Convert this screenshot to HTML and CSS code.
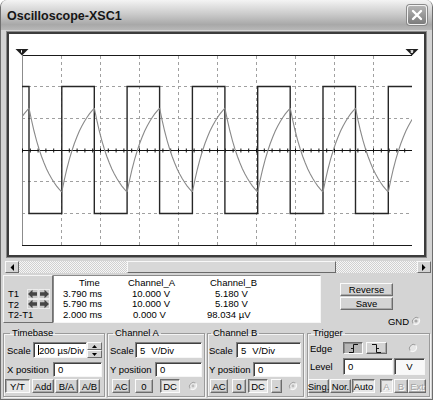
FILE: index.html
```html
<!DOCTYPE html>
<html>
<head>
<meta charset="utf-8">
<link rel="stylesheet" href="styles.css">
</head>
<body>
<div class="win">
  <div class="title">
    <span class="ttext">Oscilloscope-XSC1</span>
    <div class="close"><svg width="14" height="14" viewBox="0 0 14 14"><path d="M3 3L11 11M11 3L3 11" stroke="#fff" stroke-width="2.4" stroke-linecap="round"/></svg></div>
  </div>

  <div class="screen">
    <div class="screen-in">
      <svg class="plot" width="415" height="221" viewBox="9 34 415 221">
        <defs>
          <clipPath id="clip"><rect x="22" y="40" width="390" height="210"/></clipPath>
          <path id="rise" d="M0,0l2.51,-12.2l2.51,-10.8l2.51,-9.6l2.51,-8.4l2.51,-7.5l2.51,-6.5l2.51,-5.9l2.51,-5.1l2.51,-4.5l2.51,-4l2.51,-3.6l2.51,-3.1l2.51,-2.8"/>
          <path id="fall" d="M0,0l2.51,12.2l2.51,10.8l2.51,9.6l2.51,8.4l2.51,7.5l2.51,6.5l2.51,5.9l2.51,5.1l2.51,4.5l2.51,4l2.51,3.6l2.51,3.1l2.51,2.8"/>
        </defs>
        <g stroke="#a0a0a0" stroke-width="1" stroke-dasharray="3 3" fill="none">
          <path d="M22 86.5H412M22 118.5H412M22 181.5H412M22 213.5H412"/>
          <path d="M61.5 56V245M100.5 56V245M139.5 56V245M178.5 56V245M217.5 56V245M256.5 56V245M295.5 56V245M334.5 56V245M373.5 56V245"/>
        </g>
        <path d="M22 55.5H412M22 245.5H412" stroke="#1a1a1a" stroke-width="1.2" fill="none"/>
        <path d="M22.5 55V245" stroke="#8c8c8c" stroke-width="1" fill="none"/>
        <path d="M22 150.5H412" stroke="#111" stroke-width="1.2" fill="none"/>
        <path d="M22 150.5H412" stroke="#111" stroke-width="4" stroke-dasharray="1 6.8" fill="none"/>
        <path d="M22 86.5H29V213.5H61.8V86.5H94.3V213.5H127.1V86.5H159.6V213.5H192.4V86.5H224.9V213.5H257.7V86.5H290.2V213.5H323V86.5H355.5V213.5H388.3V86.5H412" stroke="#262626" stroke-width="1.4" fill="none"/>
        <g stroke="#8a8a8a" stroke-width="1.1" fill="none" clip-path="url(#clip)">
          <use href="#rise" x="-3.5" y="192"/>
          <use href="#fall" x="29" y="108"/>
          <use href="#rise" x="61.8" y="192"/>
          <use href="#fall" x="94.3" y="108"/>
          <use href="#rise" x="127.1" y="192"/>
          <use href="#fall" x="159.6" y="108"/>
          <use href="#rise" x="192.4" y="192"/>
          <use href="#fall" x="224.9" y="108"/>
          <use href="#rise" x="257.7" y="192"/>
          <use href="#fall" x="290.2" y="108"/>
          <use href="#rise" x="323" y="192"/>
          <use href="#fall" x="355.5" y="108"/>
          <use href="#rise" x="388.3" y="192"/>
        </g>
        <path d="M15.5 49H28.5L22 55.5Z" fill="#1e1e1e"/>
        <path d="M21.5 50.2V52.6" stroke="#fff" stroke-width="1"/>
        <path d="M405.5 49H418.5L412 55.5Z" fill="#1e1e1e"/>
        <path d="M410.5 50.5H413V51.5H411V52.5H413" stroke="#fff" stroke-width="0.8" fill="none"/>
      </svg>
    </div>
  </div>

  <div class="scroll">
    <div class="sbtn"><svg width="4" height="7" viewBox="0 0 4 7"><path d="M4 0V7L0.5 3.5Z" fill="#000"/></svg></div>
    <div class="track"><div class="thumb"></div></div>
    <div class="sbtn"><svg width="4" height="7" viewBox="0 0 4 7"><path d="M0 0V7L3.5 3.5Z" fill="#000"/></svg></div>
  </div>

  <div class="readout">
    <div class="tpanel">
      <div class="trow"></div>
      <div class="trow"><span class="tl">T1</span><svg class="arr" width="23" height="10" viewBox="0 0 23 10"><rect x="0.5" y="0.5" width="10.5" height="9" fill="#c8c8c8" stroke="#ececec"/><rect x="12" y="0.5" width="10.5" height="9" fill="#c8c8c8" stroke="#ececec"/><path d="M1 5L5.5 0.8V3.2H10V6.8H5.5V9.2Z" fill="#464646"/><path d="M22 5L17.5 0.8V3.2H13V6.8H17.5V9.2Z" fill="#464646"/></svg></div>
      <div class="trow"><span class="tl">T2</span><svg class="arr" width="23" height="10" viewBox="0 0 23 10"><rect x="0.5" y="0.5" width="10.5" height="9" fill="#c8c8c8" stroke="#ececec"/><rect x="12" y="0.5" width="10.5" height="9" fill="#c8c8c8" stroke="#ececec"/><path d="M1 5L5.5 0.8V3.2H10V6.8H5.5V9.2Z" fill="#464646"/><path d="M22 5L17.5 0.8V3.2H13V6.8H17.5V9.2Z" fill="#464646"/></svg></div>
      <div class="trow"><span class="tl">T2-T1</span></div>
    </div>
    <div class="table">
      <span class="c hd1">Time</span><span class="c">Channel_A</span><span class="c hd3">Channel_B</span>
      <span class="c">3.790 ms</span><span class="c v2">10.000 V</span><span class="c v3">5.180 V</span>
      <span class="c">5.790 ms</span><span class="c v2">10.000 V</span><span class="c v3">5.180 V</span>
      <span class="c">2.000 ms</span><span class="c v2b">0.000 V</span><span class="c">98.034 µV</span>
    </div>
    <div class="rside">
      <div class="btn rbtn">Reverse</div>
      <div class="btn rbtn save">Save</div>
      <div class="gnd"><span>GND</span><svg width="10" height="10" viewBox="0 0 10 10"><circle cx="5" cy="5" r="4" fill="#e6e6e6"/><path d="M2.2 7.8A4 4 0 0 1 7.8 2.2" stroke="#9a9a9a" fill="none"/><path d="M7.8 2.2A4 4 0 0 1 2.2 7.8" stroke="#fafafa" fill="none"/><circle cx="5" cy="5" r="1.6" fill="#a8a8a8"/></svg></div>
    </div>
  </div>

  <div class="groups">
    <fieldset class="grp g-tb">
      <legend class="lg-tb">Timebase</legend>
      <div class="row r1">
        <span class="lab w29 pl3">Scale</span>
        <div class="inp w54"><i class="caret"></i>200 µs/Div</div>
        <div class="spin">
          <span class="sp"><svg width="5" height="3" viewBox="0 0 5 3"><path d="M0 3H5L2.5 0Z" fill="#000"/></svg></span>
          <span class="sp"><svg width="5" height="3" viewBox="0 0 5 3"><path d="M0 0H5L2.5 3Z" fill="#000"/></svg></span>
        </div>
      </div>
      <div class="row r2">
        <span class="lab w49 pl3">X position</span>
        <div class="inp w49">0</div>
      </div>
      <div class="row r3">
        <span class="btn on w25 ml1">Y/T</span>
        <span class="btn w22 ml2">Add</span>
        <span class="btn w23 ml1">B/A</span>
        <span class="btn w21 ml1">A/B</span>
      </div>
    </fieldset>

    <fieldset class="grp g-cha">
      <legend class="lg-cha">Channel A</legend>
      <div class="row r1">
        <span class="lab w27 pl2">Scale</span>
        <div class="inp w67">5<span class="unit">V/Div</span></div>
      </div>
      <div class="row r2">
        <span class="lab w47 pl2">Y position</span>
        <div class="inp w47">0</div>
      </div>
      <div class="row r3">
        <span class="btn w18 ml4">AC</span>
        <span class="btn w18 ml5">0</span>
        <span class="btn on w20 ml7">DC</span>
        <svg class="radio ml8" width="10" height="10" viewBox="0 0 10 10"><circle cx="5" cy="5" r="4" fill="#e6e6e6"/><path d="M2.2 7.8A4 4 0 0 1 7.8 2.2" stroke="#a0a0a0" fill="none"/><path d="M7.8 2.2A4 4 0 0 1 2.2 7.8" stroke="#fafafa" fill="none"/><circle cx="5" cy="5" r="1.4" fill="#bcbcbc"/></svg>
      </div>
    </fieldset>

    <fieldset class="grp g-chb">
      <legend class="lg-chb">Channel B</legend>
      <div class="row r1">
        <span class="lab w28 pl1">Scale</span>
        <div class="inp w65">5<span class="unit">V/Div</span></div>
      </div>
      <div class="row r2">
        <span class="lab w45 pl1">Y position</span>
        <div class="inp w48">0</div>
      </div>
      <div class="row r3">
        <span class="btn w18 ml2">AC</span>
        <span class="btn w14 ml4">0</span>
        <span class="btn on w20 ml2">DC</span>
        <span class="btn w11 ml3">-</span>
        <svg class="radio ml6" width="10" height="10" viewBox="0 0 10 10"><circle cx="5" cy="5" r="4" fill="#e6e6e6"/><path d="M2.2 7.8A4 4 0 0 1 7.8 2.2" stroke="#a0a0a0" fill="none"/><path d="M7.8 2.2A4 4 0 0 1 2.2 7.8" stroke="#fafafa" fill="none"/><circle cx="5" cy="5" r="1.4" fill="#bcbcbc"/></svg>
      </div>
    </fieldset>

    <fieldset class="grp g-trig">
      <legend class="lg-trig">Trigger</legend>
      <div class="row t1">
        <span class="lab w35 pl2">Edge</span>
        <span class="btn edge-on w20"><svg width="11" height="9" viewBox="0 0 11 9"><path d="M1 8.5H5.5V0.5H10" stroke="#111" fill="none"/><path d="M3 4.5H5.5" stroke="#111"/></svg></span>
        <span class="btn w21 ml3"><svg width="11" height="9" viewBox="0 0 11 9"><path d="M1 0.5H5.5V8.5H10" stroke="#111" fill="none"/><path d="M5.5 4.5H8" stroke="#111"/></svg></span>
        <svg class="radio ml21" width="10" height="10" viewBox="0 0 10 10"><circle cx="5" cy="5" r="4" fill="#e6e6e6"/><path d="M2.2 7.8A4 4 0 0 1 7.8 2.2" stroke="#9a9a9a" fill="none"/><path d="M7.8 2.2A4 4 0 0 1 2.2 7.8" stroke="#fafafa" fill="none"/></svg>
      </div>
      <div class="row t2">
        <span class="lab w35 pl2">Level</span>
        <div class="inp w50">0</div>
        <div class="vbox ml1">V</div>
      </div>
      <div class="row t3">
        <span class="btn w21">Sing.</span>
        <span class="btn w21 ml1">Nor.</span>
        <span class="btn on w23 ml1">Auto</span>
        <span class="btn on off w13 ml5">A</span>
        <span class="btn off w14 ml1">B</span>
        <span class="btn off w18">Ext</span>
      </div>
    </fieldset>
  </div>
</div>
</body>
</html>
```

FILE: styles.css
```css
* { box-sizing: border-box; }

body {
  margin: 0;
  background: #fff;
  font-family: "Liberation Sans", Arial, sans-serif;
  font-size: 9.5px;
  color: #000;
}

.win {
  width: 433px;
  height: 400px;
  background: #d4d4d4;
  border: 1px solid #6e6e6e;
  border-top: 0;
  border-radius: 7px 7px 0 0;
  overflow: hidden;
  display: flex;
  flex-direction: column;
}

.title {
  flex: none;
  height: 30px;
  display: flex;
  align-items: center;
  justify-content: space-between;
  padding: 0 5px 0 6px;
  background: linear-gradient(#f4f4f4 0%, #e4e4e4 18%, #c8c8c8 50%, #a8a8a8 82%, #b8b8b8 100%);
}

.ttext {
  font-weight: bold;
  font-size: 12.5px;
  color: #161616;
  padding-top: 2px;
}

.close {
  width: 20px;
  height: 20px;
  border-radius: 3px;
  border: 1px solid #f2f2f2;
  box-shadow: 0 0 0 1px #8a8a8a;
  background: linear-gradient(#b4b4b4, #7c7c7c);
  display: flex;
  align-items: center;
  justify-content: center;
}

.screen {
  flex: none;
  margin: 1px 0 0 5px;
  width: 421px;
  height: 227px;
  border: 1px solid #8a8a8a;
}

.screen-in {
  width: 100%;
  height: 100%;
  border: 2px solid #3c3c3c;
  background: #fff;
}

.plot { display: block; }

.scroll {
  flex: none;
  display: flex;
  margin: 3px 0 0 4px;
  width: 426px;
  height: 12px;
}

.sbtn {
  flex: none;
  width: 14px;
  height: 12px;
  background: #d4d4d4;
  border: 1px solid;
  border-color: #f8f8f8 #6a6a6a #6a6a6a #f8f8f8;
  display: flex;
  align-items: center;
  justify-content: center;
}

.track {
  flex: 1;
  display: flex;
  background: repeating-conic-gradient(#f6f6f6 0 25%, #d0d0d0 0 50%) 0 0 / 2px 2px;
}

.thumb {
  margin-left: 108px;
  width: 209px;
  height: 12px;
  background: #d8d8d8;
  border: 1px solid;
  border-color: #f8f8f8 #6a6a6a #6a6a6a #f8f8f8;
}

.readout {
  flex: none;
  display: flex;
  margin: 2px 0 0 2px;
  height: 48px;
}

.tpanel {
  flex: none;
  width: 50px;
  height: 48px;
  border: 1px solid;
  border-color: #f6f6f6 #707070 #707070 #f6f6f6;
  padding: 2px 0 0 4px;
}

.trow {
  height: 10.5px;
  display: flex;
  align-items: center;
}

.tl {
  width: 19px;
  white-space: nowrap;
}

.arr { display: block; flex: none; }

.table {
  flex: none;
  width: 268px;
  height: 48px;
  background: #fff;
  border: 1px solid;
  border-color: #8a8a8a #f6f6f6 #f6f6f6 #8a8a8a;
  padding: 2px 0 0 9px;
  display: grid;
  grid-template-columns: 65px 79px auto;
  grid-auto-rows: 10.5px;
  align-items: center;
}

.c { white-space: nowrap; line-height: 10.5px; }
.hd1 { padding-left: 16px; }
.hd3 { padding-left: 3px; }
.v2 { padding-left: 4px; }
.v2b { padding-left: 5px; }
.v3 { padding-left: 8px; }

.rside {
  flex: 1;
  padding: 8px 0 0 19px;
}

.btn {
  flex: none;
  height: 100%;
  display: flex;
  align-items: center;
  justify-content: center;
  white-space: nowrap;
  background: #d4d4d4;
  border: 1px solid;
  border-color: #fbfbfb #6c6c6c #6c6c6c #fbfbfb;
  box-shadow: inset -1px -1px 0 #a8a8a8;
}

.btn.on {
  border-color: #6c6c6c #fbfbfb #fbfbfb #6c6c6c;
  box-shadow: inset 1px 1px 0 #a8a8a8;
  background: #e6e6e6;
}

.btn.edge-on {
  border-color: #6c6c6c #fbfbfb #fbfbfb #6c6c6c;
  box-shadow: inset 1px 1px 0 #8c8c8c;
  background: #b6b6b6;
}

.btn.off {
  color: #a4a4a4;
  text-shadow: 1px 1px 0 #fff;
}

.rbtn {
  width: 53px;
  height: 13px;
}

.save { margin-top: 1px; }

.gnd {
  margin-top: 6px;
  display: flex;
  align-items: center;
  justify-content: flex-end;
  padding-right: 11px;
  gap: 2px;
  height: 10px;
}

.groups {
  flex: none;
  display: flex;
  margin: 4px 0 0 2px;
}

.grp {
  margin: 0;
  padding: 0 0 3px;
  min-width: 0;
  border: 1px solid #9a9a9a;
  box-shadow: inset 1px 1px 0 #f4f4f4, 1px 1px 0 #f4f4f4;
}

.grp legend {
  padding: 0 2px;
  line-height: 12px;
  font-size: 9.5px;
}

.g-tb { width: 102px; margin-right: 2px; }
.g-cha { width: 98px; margin-right: 2px; }
.g-chb { width: 97px; margin-right: 3px; }
.g-trig { width: 123px; }

.lg-tb { margin-left: 6px; }
.lg-cha { margin-left: 5px; }
.lg-chb { margin-left: 3px; }
.lg-trig { margin-left: 3px; }

.row {
  display: flex;
  align-items: center;
}

.r1 { margin-top: 3px; height: 16px; }
.r2 { margin-top: 4px; height: 15px; }
.r3 { margin-top: 2px; height: 14px; }
.t1 { margin-top: 3px; height: 12px; }
.t2 { margin-top: 4px; height: 17px; }
.t3 { margin-top: 4px; height: 14px; }

.lab {
  flex: none;
  white-space: nowrap;
}

.inp {
  flex: none;
  height: 100%;
  background: #fff;
  border: 1px solid;
  border-color: #808080 #f6f6f6 #f6f6f6 #808080;
  box-shadow: inset 1px 1px 0 #404040;
  padding-left: 4px;
  display: flex;
  align-items: center;
  white-space: nowrap;
}

.unit { margin-left: 6px; }

.caret {
  display: inline-block;
  width: 1px;
  height: 10px;
  background: #000;
  margin-right: 0;
}

.spin {
  flex: none;
  width: 15px;
  height: 16px;
  display: flex;
  flex-direction: column;
}

.sp {
  flex: 1;
  display: flex;
  align-items: center;
  justify-content: center;
  background: #d4d4d4;
  border: 1px solid;
  border-color: #fbfbfb #6c6c6c #6c6c6c #fbfbfb;
}

.vbox {
  flex: none;
  width: 31px;
  height: 100%;
  background: #f8f8f8;
  border: 1px solid;
  border-color: #808080 #f6f6f6 #f6f6f6 #808080;
  box-shadow: inset 1px 1px 0 #404040;
  display: flex;
  align-items: center;
  justify-content: center;
}

.radio { flex: none; display: block; }

.pl1 { padding-left: 1px; }
.pl2 { padding-left: 2px; }
.pl3 { padding-left: 3px; }

.ml1 { margin-left: 1px; }
.ml2 { margin-left: 2px; }
.ml3 { margin-left: 3px; }
.ml4 { margin-left: 4px; }
.ml5 { margin-left: 5px; }
.ml6 { margin-left: 6px; }
.ml7 { margin-left: 7px; }
.ml8 { margin-left: 8px; }
.ml21 { margin-left: 21px; }

.w11 { width: 11px; }
.w13 { width: 13px; }
.w14 { width: 14px; }
.w18 { width: 18px; }
.w20 { width: 20px; }
.w21 { width: 21px; }
.w22 { width: 22px; }
.w23 { width: 23px; }
.w25 { width: 25px; }
.w27 { width: 27px; }
.w28 { width: 28px; }
.w29 { width: 29px; }
.w35 { width: 35px; }
.w45 { width: 45px; }
.w47 { width: 47px; }
.w48 { width: 48px; }
.w49 { width: 49px; }
.w50 { width: 50px; }
.w54 { width: 54px; }
.w65 { width: 65px; }
.w67 { width: 67px; }
```
